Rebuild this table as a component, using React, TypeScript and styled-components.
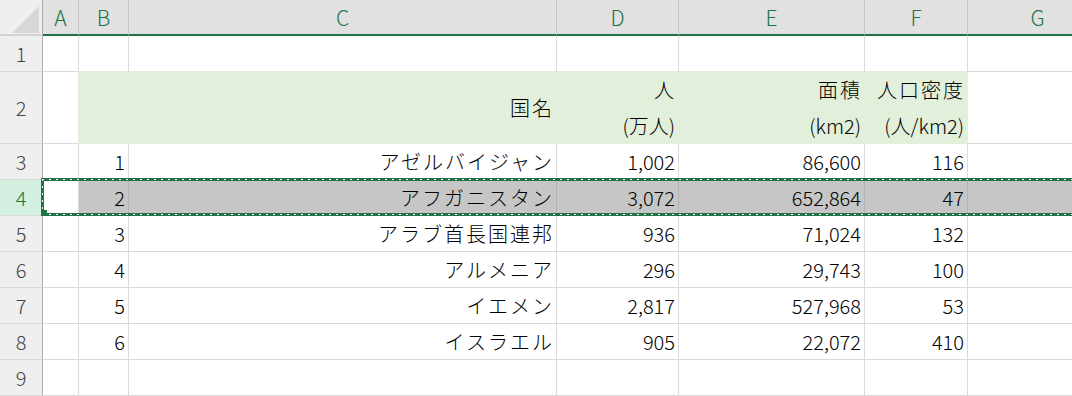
import React from 'react';
import styled, { createGlobalStyle } from 'styled-components';

const GREEN = '#217346';
const GRID = '#dadada';
const HEAD_FILL = '#e2efda';
const SEL_FILL = '#c6c6c6';

const GlobalStyle = createGlobalStyle`
  html, body {
    margin: 0;
    padding: 0;
    background: #ffffff;
    overflow: hidden;
  }
  body {
    font-family: "Noto Sans CJK JP", "Noto Sans", sans-serif;
  }
`;

const Sheet = styled.div`
  position: relative;
  width: 1072px;
  height: 396px;
  overflow: hidden;
  background: #fff;
`;

const Grid = styled.div`
  display: grid;
  grid-template-columns: 43px 36px 50px 428px 122px 186px 103px 140px;
  grid-template-rows: 36px 36px 72px repeat(7, 36px);
  width: max-content;
`;

const Corner = styled.div`
  display: flex;
  align-items: flex-end;
  justify-content: flex-end;
  padding: 0 3px 1px 0;
  box-sizing: border-box;
  background: #efefef;
  border-right: 1px solid #ababab;
  border-bottom: 2px solid #d2d2d2;
`;

const ColHeader = styled.div`
  display: flex;
  align-items: center;
  justify-content: center;
  box-sizing: border-box;
  background: #e1e1e1;
  border-right: 1px solid #c4c4c4;
  border-bottom: 2px solid ${GREEN};
  color: ${GREEN};
  font-size: 21px;
  font-weight: 300;
  line-height: 1;
`;

const RowHeader = styled.div<{ $active?: boolean }>`
  display: flex;
  align-items: center;
  justify-content: center;
  box-sizing: border-box;
  background: ${p => (p.$active ? '#d3f0e0' : '#efefef')};
  color: ${p => (p.$active ? GREEN : '#444444')};
  border-right: 1px solid ${p => (p.$active ? GREEN : '#ababab')};
  border-bottom: 1px solid #d9d9d9;
  font-size: 20px;
  font-weight: 300;
  line-height: 1;
`;

const Cell = styled.div<{ $bg?: string; $right?: string; $bottom?: string }>`
  display: flex;
  align-items: center;
  justify-content: flex-end;
  box-sizing: border-box;
  padding-right: 3px;
  background: ${p => p.$bg || '#ffffff'};
  border-right: 1px solid ${p => p.$right || GRID};
  border-bottom: 1px solid ${p => p.$bottom || GRID};
  color: #000;
  font-size: 20px;
  font-weight: 300;
  line-height: 1;
  white-space: nowrap;
`;

// Japanese text in the reference font runs a little wider than Noto
const Jp = styled.span`
  letter-spacing: 2px;
  margin-right: -1px;
`;

const TwoLine = styled.div`
  display: flex;
  flex-direction: column;
  align-items: flex-end;
  line-height: 36px;
`;

const Marquee = styled.div`
  position: absolute;
  left: 41px;
  top: 178px;
  right: -4px;
  height: 38px;
  box-sizing: border-box;
  border: 3px solid ${GREEN};
  pointer-events: none;

  &::after {
    content: '';
    position: absolute;
    inset: -2px;
    background:
      repeating-linear-gradient(90deg, #fff 0 2px, transparent 2px 7px) top / 100% 1px no-repeat,
      repeating-linear-gradient(90deg, #fff 0 2px, transparent 2px 7px) bottom / 100% 1px no-repeat,
      repeating-linear-gradient(180deg, #fff 0 2px, transparent 2px 7px) left / 1px 100% no-repeat;
  }
`;

const FillHandle = styled.div`
  position: absolute;
  left: -3px;
  bottom: -3px;
  width: 6px;
  height: 6px;
  background: ${GREEN};
  z-index: 1;
`;

const columns = ['A', 'B', 'C', 'D', 'E', 'F', 'G'];

const countries = [
  { no: '1', name: 'アゼルバイジャン', pop: '1,002', area: '86,600', density: '116' },
  { no: '2', name: 'アフガニスタン', pop: '3,072', area: '652,864', density: '47' },
  { no: '3', name: 'アラブ首長国連邦', pop: '936', area: '71,024', density: '132' },
  { no: '4', name: 'アルメニア', pop: '296', area: '29,743', density: '100' },
  { no: '5', name: 'イエメン', pop: '2,817', area: '527,968', density: '53' },
  { no: '6', name: 'イスラエル', pop: '905', area: '22,072', density: '410' },
];

const SELECTED_ROW = 4;

const emptyRow = (n: number) => (
  <React.Fragment key={n}>
    <RowHeader>{n}</RowHeader>
    {columns.map(c => (
      <Cell key={c} $bottom={n === 1 && c !== 'A' && c !== 'G' ? HEAD_FILL : undefined} />
    ))}
  </React.Fragment>
);

const App: React.FC = () => {
  return (
    <Sheet>
      <GlobalStyle />
      <Grid>
        <Corner>
          <svg width="27" height="27" viewBox="0 0 27 27">
            <polygon points="0,27 27,27 27,0" fill="#d8d8d8" />
          </svg>
        </Corner>
        {columns.map(c => (
          <ColHeader key={c}>{c}</ColHeader>
        ))}

        {emptyRow(1)}

        <RowHeader>2</RowHeader>
        <Cell $right={HEAD_FILL} />
        <Cell $bg={HEAD_FILL} $right={HEAD_FILL} $bottom={HEAD_FILL} />
        <Cell $bg={HEAD_FILL} $right={HEAD_FILL} $bottom={HEAD_FILL}>
          <Jp>国名</Jp>
        </Cell>
        <Cell $bg={HEAD_FILL} $right={HEAD_FILL} $bottom={HEAD_FILL}>
          <TwoLine>
            <Jp>人</Jp>
            <span>(万人)</span>
          </TwoLine>
        </Cell>
        <Cell $bg={HEAD_FILL} $right={HEAD_FILL} $bottom={HEAD_FILL}>
          <TwoLine>
            <Jp>面積</Jp>
            <span>(km2)</span>
          </TwoLine>
        </Cell>
        <Cell $bg={HEAD_FILL} $right={HEAD_FILL} $bottom={HEAD_FILL}>
          <TwoLine>
            <Jp>人口密度</Jp>
            <span>(人/km2)</span>
          </TwoLine>
        </Cell>
        <Cell />

        {countries.map((r, i) => {
          const rowNo = i + 3;
          const sel = rowNo === SELECTED_ROW;
          const bg = sel ? SEL_FILL : undefined;
          const line = sel ? '#b2b2b2' : undefined;
          return (
            <React.Fragment key={r.no}>
              <RowHeader $active={sel}>{rowNo}</RowHeader>
              <Cell />
              <Cell $bg={bg} $right={line}>{r.no}</Cell>
              <Cell $bg={bg} $right={line}>
                <Jp>{r.name}</Jp>
              </Cell>
              <Cell $bg={bg} $right={line}>{r.pop}</Cell>
              <Cell $bg={bg} $right={line}>{r.area}</Cell>
              <Cell $bg={bg} $right={line}>{r.density}</Cell>
              <Cell $bg={bg} $right={line} />
            </React.Fragment>
          );
        })}

        {emptyRow(9)}
      </Grid>
      <Marquee>
        <FillHandle />
      </Marquee>
    </Sheet>
  );
};

export default App;
